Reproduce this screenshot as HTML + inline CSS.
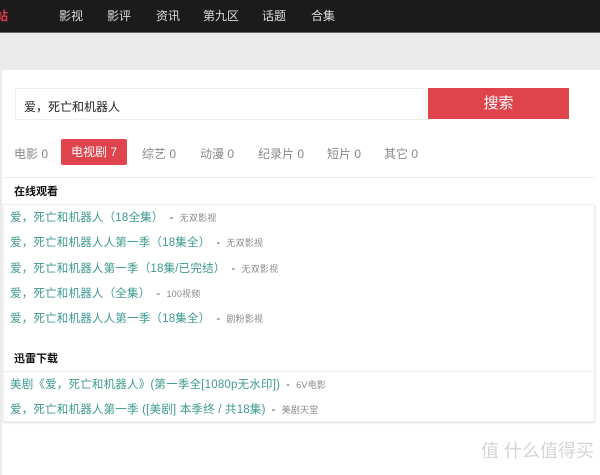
<!DOCTYPE html>
<html><head><meta charset="utf-8"><style>
*{margin:0;padding:0;box-sizing:border-box}
body{width:600px;height:475px;overflow:hidden;background:#ebebeb;font-family:"Liberation Sans","Noto Sans CJK SC",sans-serif;position:relative}
.nav{height:33px;background:#1c1b1c;position:relative;border-bottom:1px solid #666}
.nav span{position:absolute;top:7px;color:#ddd;font-size:12px}
.logo{color:#e53a4a!important;font-weight:bold;left:-4px}
.panel{position:absolute;left:2px;top:70px;width:598px;height:405px;background:#fff}
.inp{position:absolute;left:13px;top:18px;width:411px;height:32px;border:1px solid #eee;font-size:12px;color:#222;padding:9px 0 0 8px}
.btn{position:absolute;left:426px;top:18px;width:141px;height:31px;background:#df434c;color:#fff;font-size:15px;text-align:center;line-height:31px}
.tab{position:absolute;top:75px;font-size:12px;color:#888}
.act{background:#df434c;color:#fff;left:59px;top:69px;width:66px;height:26px;line-height:26px;text-align:center;border-radius:2px}
.box{position:absolute;left:1px;width:592px;border:1px solid #eee;box-shadow:0 1px 2px #ddd}
.hd{position:absolute;left:12px;font-size:11px;font-weight:bold;color:#111}
.it{position:absolute;left:8px;font-size:11.5px;color:#3e9a90;white-space:nowrap;letter-spacing:0.2px}
.it i{font-style:normal;color:#888;font-size:9px}
.it b{font-weight:normal;color:#555;margin:0 6px}
.wm{position:absolute;right:6px;bottom:12px;font-size:18px;color:#d4d4d4}
</style></head><body>
<div class="nav">
<span class="logo">站</span>
<span style="left:59px">影视</span><span style="left:107px">影评</span><span style="left:156px">资讯</span><span style="left:203px">第九区</span><span style="left:262px">话题</span><span style="left:311px">合集</span>
</div>
<div class="panel">
<div class="inp">爱，死亡和机器人</div>
<div class="btn">搜索</div>
<span class="tab" style="left:12px">电影 0</span>
<span class="tab act">电视剧 7</span>
<span class="tab" style="left:140px">综艺 0</span>
<span class="tab" style="left:198px">动漫 0</span>
<span class="tab" style="left:256px">纪录片 0</span>
<span class="tab" style="left:325px">短片 0</span>
<span class="tab" style="left:382px">其它 0</span>
<div class="box" style="top:107px;height:0;border:none;border-top:1px solid #eee;box-shadow:none"></div>
<div class="box" style="top:134px;height:218px"></div>
<span class="hd" style="top:113px">在线观看</span>
<span class="it" style="top:139px">爱，死亡和机器人（18全集）<b>-</b><i>无双影视</i></span>
<span class="it" style="top:164px">爱，死亡和机器人人第一季（18集全）<b>-</b><i>无双影视</i></span>
<span class="it" style="top:190px">爱，死亡和机器人第一季（18集/已完结）<b>-</b><i>无双影视</i></span>
<span class="it" style="top:215px">爱，死亡和机器人（全集）<b>-</b><i>100视频</i></span>
<span class="it" style="top:240px">爱，死亡和机器人人第一季（18集全）<b>-</b><i>剧粉影视</i></span>
<span class="hd" style="top:280px">迅雷下载</span>
<div class="box" style="top:301px;height:0;border:none;border-top:1px solid #eee;box-shadow:none"></div>
<span class="it" style="top:306px">美剧《爱，死亡和机器人》(第一季全[1080p无水印])<b>-</b><i>6V电影</i></span>
<span class="it" style="top:331px">爱，死亡和机器人第一季 ([美剧] 本季终 / 共18集)<b>-</b><i>美剧天堂</i></span>
</div>
<div class="wm">值 什么值得买</div>
</body></html>
